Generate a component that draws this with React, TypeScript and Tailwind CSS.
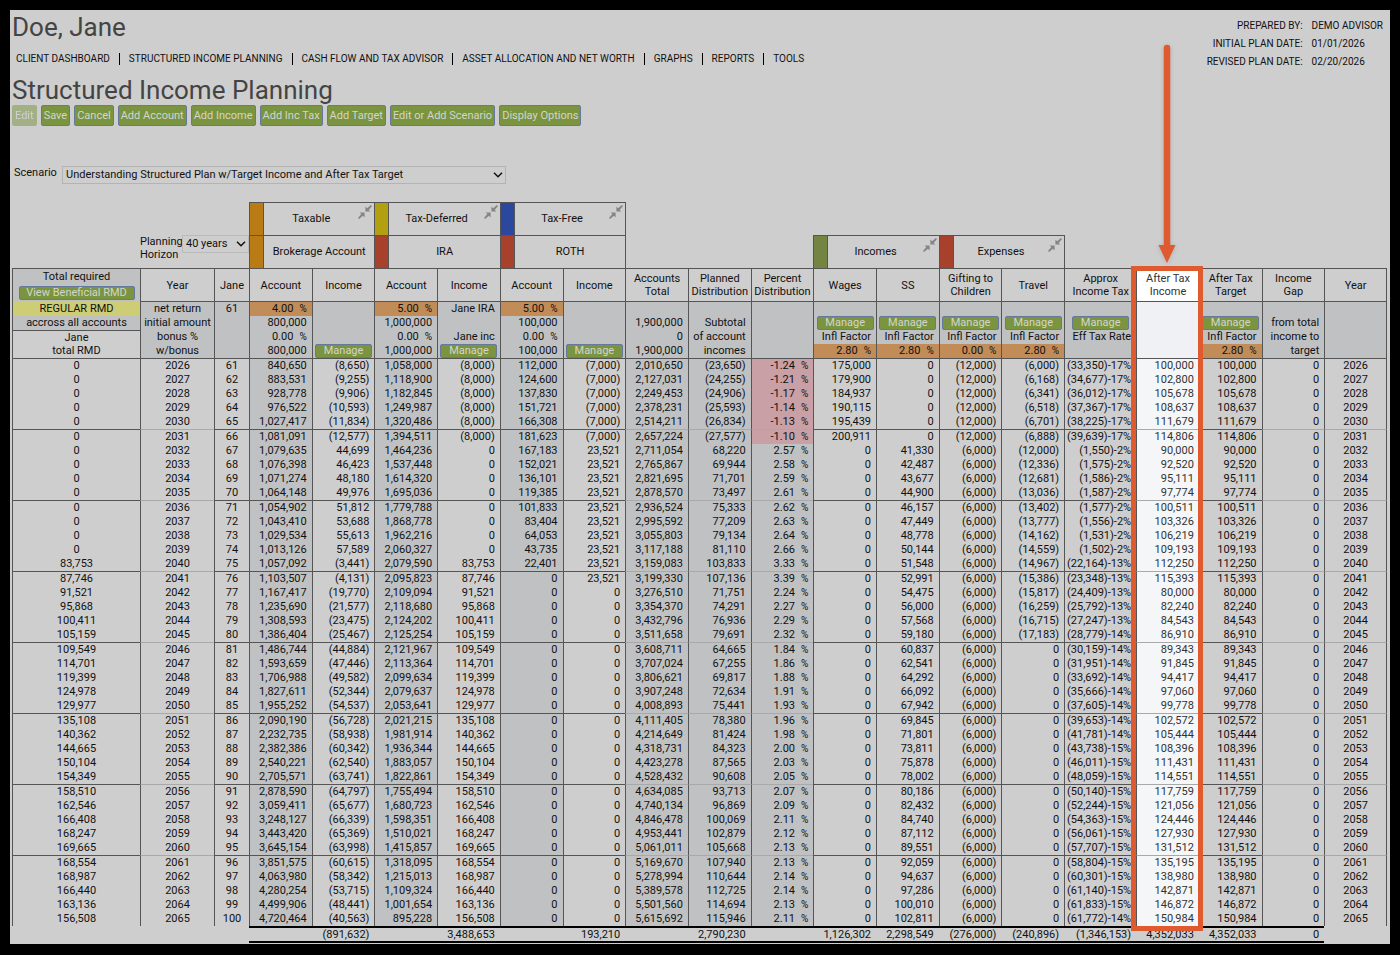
import { ReactNode, useState } from "react";
import { clsx } from "clsx";

const NAV = [
  "CLIENT DASHBOARD",
  "STRUCTURED INCOME PLANNING",
  "CASH FLOW AND TAX ADVISOR",
  "ASSET ALLOCATION AND NET WORTH",
  "GRAPHS",
  "REPORTS",
  "TOOLS",
];

const ACTIONS = ["Edit", "Save", "Cancel", "Add Account", "Add Income", "Add Inc Tax", "Add Target", "Edit or Add Scenario", "Display Options"];

const PLAN_INFO = [
  ["PREPARED BY:", "DEMO ADVISOR"],
  ["INITIAL PLAN DATE:", "01/01/2026"],
  ["REVISED PLAN DATE:", "02/20/2026"],
];

type Column = {
  label: string;
  width?: string;
  center?: boolean;
  shaded?: boolean; // grey background in the yearly rows
  faint?: boolean; // light rule between the five year groups
  highlight?: boolean;
};

const COLUMNS: Column[] = [
  { label: "Total required", width: "w-32", center: true },
  { label: "Year", width: "w-[74px]", center: true, faint: true },
  { label: "Jane", width: "w-[35px]", center: true },
  { label: "Account", shaded: true },
  { label: "Income" },
  { label: "Account", shaded: true },
  { label: "Income" },
  { label: "Account", shaded: true },
  { label: "Income" },
  { label: "Accounts\nTotal", shaded: true, faint: true },
  { label: "Planned\nDistribution", shaded: true, faint: true },
  { label: "Percent\nDistribution", shaded: true, faint: true },
  { label: "Wages" },
  { label: "SS" },
  { label: "Gifting to\nChildren" },
  { label: "Travel" },
  { label: "Approx\nIncome Tax", width: "w-[72px]" },
  { label: "After Tax\nIncome", highlight: true, faint: true },
  { label: "After Tax\nTarget" },
  { label: "Income\nGap", faint: true },
  { label: "Year", center: true, faint: true },
];

const SETTINGS = [
  ["REGULAR RMD", "net return", "61", "4.00 %", "", "5.00 %", "Jane IRA", "5.00 %", "", "", "", "", "", "", "", "", "", "", "", "", ""],
  ["accross all accounts", "initial amount", "", "800,000", "", "1,000,000", "", "100,000", "", "1,900,000", "Subtotal", "", "Manage", "Manage", "Manage", "Manage", "Manage", "", "Manage", "from total", ""],
  ["Jane", "bonus %", "", "0.00 %", "", "0.00 %", "Jane inc", "0.00 %", "", "0", "of account", "", "Infl Factor", "Infl Factor", "Infl Factor", "Infl Factor", "Eff Tax Rate", "", "Infl Factor", "income to", ""],
  ["total RMD", "w/bonus", "", "800,000", "Manage", "1,000,000", "Manage", "100,000", "Manage", "1,900,000", "incomes", "", "2.80 %", "2.80 %", "0.00 %", "2.80 %", "", "", "2.80 %", "target", ""],
];

// rmd, brokerage, income, ira, income, roth, income, total, planned, percent, wages, ss, gifting, travel, tax, target
const PLAN = `
0 840,650 (8,650) 1,058,000 (8,000) 112,000 (7,000) 2,010,650 (23,650) -1.24 175,000 0 (12,000) (6,000) (33,350)-17% 100,000
0 883,531 (9,255) 1,118,900 (8,000) 124,600 (7,000) 2,127,031 (24,255) -1.21 179,900 0 (12,000) (6,168) (34,677)-17% 102,800
0 928,778 (9,906) 1,182,845 (8,000) 137,830 (7,000) 2,249,453 (24,906) -1.17 184,937 0 (12,000) (6,341) (36,012)-17% 105,678
0 976,522 (10,593) 1,249,987 (8,000) 151,721 (7,000) 2,378,231 (25,593) -1.14 190,115 0 (12,000) (6,518) (37,367)-17% 108,637
0 1,027,417 (11,834) 1,320,486 (8,000) 166,308 (7,000) 2,514,211 (26,834) -1.13 195,439 0 (12,000) (6,701) (38,225)-17% 111,679
0 1,081,091 (12,577) 1,394,511 (8,000) 181,623 (7,000) 2,657,224 (27,577) -1.10 200,911 0 (12,000) (6,888) (39,639)-17% 114,806
0 1,079,635 44,699 1,464,236 0 167,183 23,521 2,711,054 68,220 2.57 0 41,330 (6,000) (12,000) (1,550)-2% 90,000
0 1,076,398 46,423 1,537,448 0 152,021 23,521 2,765,867 69,944 2.58 0 42,487 (6,000) (12,336) (1,575)-2% 92,520
0 1,071,274 48,180 1,614,320 0 136,101 23,521 2,821,695 71,701 2.59 0 43,677 (6,000) (12,681) (1,586)-2% 95,111
0 1,064,148 49,976 1,695,036 0 119,385 23,521 2,878,570 73,497 2.61 0 44,900 (6,000) (13,036) (1,587)-2% 97,774
0 1,054,902 51,812 1,779,788 0 101,833 23,521 2,936,524 75,333 2.62 0 46,157 (6,000) (13,402) (1,577)-2% 100,511
0 1,043,410 53,688 1,868,778 0 83,404 23,521 2,995,592 77,209 2.63 0 47,449 (6,000) (13,777) (1,556)-2% 103,326
0 1,029,534 55,613 1,962,216 0 64,053 23,521 3,055,803 79,134 2.64 0 48,778 (6,000) (14,162) (1,531)-2% 106,219
0 1,013,126 57,589 2,060,327 0 43,735 23,521 3,117,188 81,110 2.66 0 50,144 (6,000) (14,559) (1,502)-2% 109,193
83,753 1,057,092 (3,441) 2,079,590 83,753 22,401 23,521 3,159,083 103,833 3.33 0 51,548 (6,000) (14,967) (22,164)-13% 112,250
87,746 1,103,507 (4,131) 2,095,823 87,746 0 23,521 3,199,330 107,136 3.39 0 52,991 (6,000) (15,386) (23,348)-13% 115,393
91,521 1,167,417 (19,770) 2,109,094 91,521 0 0 3,276,510 71,751 2.24 0 54,475 (6,000) (15,817) (24,409)-13% 80,000
95,868 1,235,690 (21,577) 2,118,680 95,868 0 0 3,354,370 74,291 2.27 0 56,000 (6,000) (16,259) (25,792)-13% 82,240
100,411 1,308,593 (23,475) 2,124,202 100,411 0 0 3,432,796 76,936 2.29 0 57,568 (6,000) (16,715) (27,247)-13% 84,543
105,159 1,386,404 (25,467) 2,125,254 105,159 0 0 3,511,658 79,691 2.32 0 59,180 (6,000) (17,183) (28,779)-14% 86,910
109,549 1,486,744 (44,884) 2,121,967 109,549 0 0 3,608,711 64,665 1.84 0 60,837 (6,000) 0 (30,159)-14% 89,343
114,701 1,593,659 (47,446) 2,113,364 114,701 0 0 3,707,024 67,255 1.86 0 62,541 (6,000) 0 (31,951)-14% 91,845
119,399 1,706,988 (49,582) 2,099,634 119,399 0 0 3,806,621 69,817 1.88 0 64,292 (6,000) 0 (33,692)-14% 94,417
124,978 1,827,611 (52,344) 2,079,637 124,978 0 0 3,907,248 72,634 1.91 0 66,092 (6,000) 0 (35,666)-14% 97,060
129,977 1,955,252 (54,537) 2,053,641 129,977 0 0 4,008,893 75,441 1.93 0 67,942 (6,000) 0 (37,605)-14% 99,778
135,108 2,090,190 (56,728) 2,021,215 135,108 0 0 4,111,405 78,380 1.96 0 69,845 (6,000) 0 (39,653)-14% 102,572
140,362 2,232,735 (58,938) 1,981,914 140,362 0 0 4,214,649 81,424 1.98 0 71,801 (6,000) 0 (41,781)-14% 105,444
144,665 2,382,386 (60,342) 1,936,344 144,665 0 0 4,318,731 84,323 2.00 0 73,811 (6,000) 0 (43,738)-15% 108,396
150,104 2,540,221 (62,540) 1,883,057 150,104 0 0 4,423,278 87,565 2.03 0 75,878 (6,000) 0 (46,011)-15% 111,431
154,349 2,705,571 (63,741) 1,822,861 154,349 0 0 4,528,432 90,608 2.05 0 78,002 (6,000) 0 (48,059)-15% 114,551
158,510 2,878,590 (64,797) 1,755,494 158,510 0 0 4,634,085 93,713 2.07 0 80,186 (6,000) 0 (50,140)-15% 117,759
162,546 3,059,411 (65,677) 1,680,723 162,546 0 0 4,740,134 96,869 2.09 0 82,432 (6,000) 0 (52,244)-15% 121,056
166,408 3,248,127 (66,339) 1,598,351 166,408 0 0 4,846,478 100,069 2.11 0 84,740 (6,000) 0 (54,363)-15% 124,446
168,247 3,443,420 (65,369) 1,510,021 168,247 0 0 4,953,441 102,879 2.12 0 87,112 (6,000) 0 (56,061)-15% 127,930
169,665 3,645,154 (63,998) 1,415,857 169,665 0 0 5,061,011 105,668 2.13 0 89,551 (6,000) 0 (57,707)-15% 131,512
168,554 3,851,575 (60,615) 1,318,095 168,554 0 0 5,169,670 107,940 2.13 0 92,059 (6,000) 0 (58,804)-15% 135,195
168,987 4,063,980 (58,342) 1,215,013 168,987 0 0 5,278,994 110,644 2.14 0 94,637 (6,000) 0 (60,301)-15% 138,980
166,440 4,280,254 (53,715) 1,109,324 166,440 0 0 5,389,578 112,725 2.14 0 97,286 (6,000) 0 (61,140)-15% 142,871
163,136 4,499,906 (48,441) 1,001,654 163,136 0 0 5,501,560 114,694 2.13 0 100,010 (6,000) 0 (61,833)-15% 146,872
156,508 4,720,464 (40,563) 895,228 156,508 0 0 5,615,692 115,946 2.11 0 102,811 (6,000) 0 (61,772)-14% 150,984
`;

const ROWS = PLAN.trim().split("\n").map((line, i) => {
  const v = line.split(" ");
  const year = String(2026 + i);
  return [v[0], year, String(61 + i), ...v.slice(1, 9), `${v[9]} %`, ...v.slice(10, 15), v[15], v[15], "0", year];
});

const TOTALS = ["", "(891,632)", "", "3,488,653", "", "193,210", "", "2,790,230", "", "1,126,302", "2,298,549", "(276,000)", "(240,896)", "(1,346,153)", "4,352,033", "4,352,033", "0"];

function Button({ children, className, disabled }: { children: ReactNode; className?: string; disabled?: boolean }) {
  return (
    <button type="button" disabled={disabled}
      className={clsx("block rounded-xs border border-[#66799c] bg-[#7a9440] text-[#d4d6cc]", className)}>
      {children}
    </button>
  );
}

function CollapseIcon() {
  return (
    <svg viewBox="0 0 14 14" className="size-[14px] shrink-0" fill="#858585" aria-hidden="true">
      <path d="M7.4 6.6V1.6l1.7 1.7L12.9 0 14 1.1 10.7 4.9l1.7 1.7z" />
      <path d="M6.6 7.4v5L4.9 10.7 1.1 14 0 12.9 3.3 9.1 1.6 7.4z" />
    </svg>
  );
}

function Chevron() {
  return (
    <svg viewBox="0 0 10 6" className="pointer-events-none absolute right-[3px] top-[6px] h-[6px] w-[10px]" fill="none" stroke="#111" strokeWidth="1.5" aria-hidden="true">
      <path d="M1 .8 5 4.8 9 .8" />
    </svg>
  );
}

function GroupHead({ label, color, collapsible }: { label: string; color: string; collapsible?: boolean }) {
  return (
    <th colSpan={2} className="border-l border-t border-[#555] p-0 font-normal">
      <div className="flex h-8">
        <div className={clsx("w-[14px] border-r border-[#555]", color)} />
        <div className="flex-1 self-center">{label}</div>
        {collapsible && (
          <button type="button" aria-label={`Collapse ${label}`} className="mr-[2px] mt-[2px] self-start">
            <CollapseIcon />
          </button>
        )}
      </div>
    </th>
  );
}

function Value({ text }: { text: string }) {
  if (text === "Manage") return <Button className="mx-auto h-[14px] w-[57px] leading-[12px]">Manage</Button>;
  if (/^-?[\d.]+ %$/.test(text)) {
    return <>{text.slice(0, -2)}<span className="ml-[6px] text-[10px]">%</span></>;
  }
  return <>{text}</>;
}

function Pointer() {
  return (
    <svg viewBox="0 0 24 224" className="absolute bottom-full left-1/2 mb-[5px] h-56 w-6 -translate-x-1/2 drop-shadow-sm" aria-hidden="true">
      <path d="M12 6v200" stroke="#e05a30" strokeWidth="6.5" strokeLinecap="round" />
      <path d="M3.5 203h17L12 221z" fill="#e05a30" />
    </svg>
  );
}

function PlanTable() {
  const [horizon, setHorizon] = useState("40 years");

  return (
    <table className="mt-[18px] w-full table-fixed border-separate border-spacing-0 text-center leading-[14px]">
      <colgroup>
        {COLUMNS.map((c, i) => <col key={i} className={c.width} />)}
      </colgroup>
      <thead>
        <tr className="h-[33px]">
          <td colSpan={3} />
          <GroupHead label="Taxable" color="bg-[#b97b16]" collapsible />
          <GroupHead label="Tax-Deferred" color="bg-[#b2a010]" collapsible />
          <GroupHead label="Tax-Free" color="bg-[#2c479e]" collapsible />
          <td colSpan={12} className="border-l border-[#555]" />
        </tr>
        <tr className="h-[33px]">
          <td />
          <td colSpan={2} className="p-0 align-top">
            <div className="flex text-left leading-[13px]">
              <label htmlFor="horizon" className="w-[42px]">Planning Horizon</label>
              <div className="relative h-[18px] flex-1">
                <select id="horizon" value={horizon} onChange={(e) => setHorizon(e.target.value)}
                  className="block h-[18px] w-full appearance-none border border-[#bababa] pl-[3px] leading-[14px]">
                  <option>30 years</option>
                  <option>40 years</option>
                </select>
                <Chevron />
              </div>
            </div>
          </td>
          <GroupHead label="Brokerage Account" color="bg-[#b97b16]" />
          <GroupHead label="IRA" color="bg-[#a8412c]" />
          <GroupHead label="ROTH" color="bg-[#a8412c]" />
          <td colSpan={3} className="border-l border-[#555]" />
          <GroupHead label="Incomes" color="bg-[#748443]" collapsible />
          <GroupHead label="Expenses" color="bg-[#a8412c]" collapsible />
          <td colSpan={5} className="border-l border-[#555]" />
        </tr>
        <tr className="h-[33px]">
          {COLUMNS.map((c, i) => (
            <th key={i} className={clsx("whitespace-pre-line border-l border-t border-[#555] p-0 font-normal leading-[13px] last:border-r",
              i === 0 && "bg-[#bfc1c3]", c.highlight && "relative bg-white text-[#333]")}>
              {c.label}
              {i === 0 && <Button className="mx-auto mt-[3px] h-[14px] w-[116px] leading-[12px]">View Beneficial RMD</Button>}
              {c.highlight && (
                <div className="pointer-events-none absolute -left-[6px] -right-[4px] -top-[3px] h-[665px] border-[5px] border-[#e05a30]">
                  <Pointer />
                </div>
              )}
            </th>
          ))}
        </tr>
        {SETTINGS.map((cells, r) => (
          <tr key={r} className={r === 0 ? "h-[15px]" : "h-[14px]"}>
            {cells.map((text, i) => {
              const rate = (r === 0 || r === 3) && text.endsWith(" %");
              return (
                <td key={i} className={clsx("whitespace-nowrap border-l border-[#555] p-0 last:border-r",
                  r === 0 && i > 0 && "border-t",
                  r === 2 && i === 0 && "border-t leading-[13px]",
                  !COLUMNS[i].center && text !== "Manage" && "pr-[5px] text-right",
                  i === 0 ? (r === 0 ? "bg-[#cdcd76]" : r === 1 && "bg-[#bfc1c3]")
                    : COLUMNS[i].highlight ? "bg-[#f0f1f4]" : rate ? "bg-[#c18c58]" : "bg-[#bfc1c3]")}>
                  <Value text={text} />
                </td>
              );
            })}
          </tr>
        ))}
      </thead>
      <tbody>
        {ROWS.map((cells, r) => {
          const first = r % 5 === 0;
          return (
            <tr key={r} className={first ? "h-[15px]" : "h-[14px]"}>
              {cells.map((text, i) => {
                const c = COLUMNS[i];
                return (
                  <td key={i} className={clsx("whitespace-nowrap border-l border-l-[#555] p-0 last:border-r last:border-r-[#555]",
                    first && "border-t",
                    first && (c.faint && r > 0 ? "border-t-[#a9a9a9]" : "border-t-[#555]"),
                    !c.center && "pr-[5px] text-right",
                    c.highlight && "bg-[#f4f6f8] text-[#333]",
                    c.shaded && (text.startsWith("-") ? "bg-[#c9a0a5]" : "bg-[#bfc1c3]"))}>
                    <Value text={text} />
                  </td>
                );
              })}
            </tr>
          );
        })}
      </tbody>
      <tfoot>
        <tr className="h-[17px] leading-[13px]">
          <td colSpan={3} className="p-0" />
          {TOTALS.map((text, i) => (
            <td key={i} className="whitespace-nowrap border-y-2 border-black p-0 pr-[5px] text-right">{text}</td>
          ))}
          <td className="p-0" />
        </tr>
      </tfoot>
    </table>
  );
}

export default function App() {
  const [scenario, setScenario] = useState("Understanding Structured Plan w/Target Income and After Tax Target");

  return (
    <div className="min-h-screen bg-black p-[10px] font-['Roboto',sans-serif] text-[11px] text-[#111]">
      <div className="bg-[#cecece] pb-px pl-[2px] pr-[3px]">
        <header className="flex justify-between">
          <div>
            <h1 className="pt-[2px] text-[26px] leading-[30px] text-[#444]">Doe, Jane</h1>
            <nav className="mt-[10px] flex items-center pl-1 text-[10px] leading-[14px]">
              {NAV.map((item, i) => (
                <div key={item} className="flex items-center">
                  {i > 0 && <span className="mx-[9px] h-3 w-px bg-black" />}
                  <a href="#">{item}</a>
                </div>
              ))}
            </nav>
          </div>
          <dl className="grid grid-cols-[auto_auto] content-start gap-x-[9px] pr-1 pt-[7px] text-[10px] leading-[18px]">
            {PLAN_INFO.map(([label, value]) => (
              <div key={label} className="contents">
                <dt className="text-right">{label}</dt>
                <dd>{value}</dd>
              </div>
            ))}
          </dl>
        </header>

        <h2 className="mt-[4px] text-[26px] leading-[30px] text-[#444]">Structured Income Planning</h2>
        <div className="flex gap-1">
          {ACTIONS.map((a) => (
            <Button key={a} disabled={a === "Edit"} className={clsx("h-[21px] px-[2px] leading-[18px]", a === "Edit" && "border-transparent opacity-50")}>
              {a}
            </Button>
          ))}
        </div>

        <div className="mt-10 flex pl-[2px]">
          <label htmlFor="scenario" className="w-12 leading-[14px]">Scenario</label>
          <div className="relative w-[444px]">
            <select id="scenario" value={scenario} onChange={(e) => setScenario(e.target.value)}
              className="block h-[18px] w-full appearance-none border border-[#b4b4b4] pl-[3px] leading-[14px]">
              <option>Understanding Structured Plan w/Target Income and After Tax Target</option>
            </select>
            <Chevron />
          </div>
        </div>

        <PlanTable />
      </div>
    </div>
  );
}
